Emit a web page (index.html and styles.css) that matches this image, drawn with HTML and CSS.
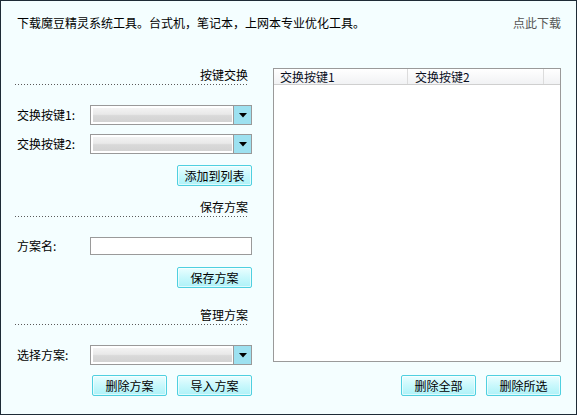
FILE: index.html
```html
<!DOCTYPE html>
<html lang="zh">
<head>
<meta charset="utf-8">
<title>按键交换</title>
<link rel="stylesheet" href="styles.css">
</head>
<body>
<div class="window">
  <div class="topbar">
    <span class="intro">下载魔豆精灵系统工具。台式机，笔记本，上网本专业优化工具。</span>
    <span class="dl">点此下载</span>
  </div>
  <div class="main">
    <div class="left">
      <div class="sec-head">按键交换</div>
      <div class="field f-key1">
        <span class="label">交换按键1:</span>
        <div class="select"><div class="sel-face"></div><div class="sel-btn"><svg width="8" height="5" viewBox="0 0 8 5"><polygon points="0,0 8,0 4,4.5" fill="#000"/></svg></div></div>
      </div>
      <div class="field f-key2">
        <span class="label">交换按键2:</span>
        <div class="select"><div class="sel-face"></div><div class="sel-btn"><svg width="8" height="5" viewBox="0 0 8 5"><polygon points="0,0 8,0 4,4.5" fill="#000"/></svg></div></div>
      </div>
      <div class="btn-row br-add"><button class="btn">添加到列表</button></div>

      <div class="sec-head sh-save">保存方案</div>
      <div class="field f-name">
        <span class="label">方案名:</span>
        <div class="input"></div>
      </div>
      <div class="btn-row br-save"><button class="btn">保存方案</button></div>

      <div class="sec-head sh-manage">管理方案</div>
      <div class="field f-pick">
        <span class="label">选择方案:</span>
        <div class="select"><div class="sel-face"></div><div class="sel-btn"><svg width="8" height="5" viewBox="0 0 8 5"><polygon points="0,0 8,0 4,4.5" fill="#000"/></svg></div></div>
      </div>
      <div class="btn-row br-manage"><button class="btn">删除方案</button><button class="btn">导入方案</button></div>
    </div>
    <div class="right">
      <div class="list">
        <div class="list-head">
          <div class="col c1">交换按键1</div>
          <div class="col c2">交换按键2</div>
          <div class="col c3"></div>
        </div>
      </div>
      <div class="btn-row br-list"><button class="btn">删除全部</button><button class="btn">删除所选</button></div>
    </div>
  </div>
</div>
</body>
</html>
```

FILE: styles.css
```css
html, body {
  margin: 0;
  padding: 0;
  background: #ffffff;
}
body {
  font-family: "Noto Sans CJK SC", "Liberation Sans", sans-serif;
  font-size: 12px;
  color: #000;
}
.window {
  width: 577px;
  height: 415px;
  box-sizing: border-box;
  border: 1px solid #1e2b36;
  background: #f4feff;
}
.topbar {
  height: 63px;
  box-sizing: border-box;
  padding: 13px 15px 0 16px;
  display: flex;
  justify-content: space-between;
  align-items: flex-start;
  line-height: 18px;
}
.dl {
  color: #555;
}
.main {
  display: flex;
  padding-left: 14px;
}
.left {
  width: 237px;
  display: flex;
  flex-direction: column;
}
.right {
  width: 288px;
  margin-left: 21px;
  display: flex;
  flex-direction: column;
}
.sec-head {
  height: 20px;
  box-sizing: border-box;
  padding: 2px 4px 0 0;
  line-height: 18px;
  text-align: right;
  position: relative;
}
.sec-head::after {
  content: "";
  display: block;
  height: 1px;
  margin-top: 0;
  background-image: repeating-linear-gradient(to right, #5a5a5a 0, #5a5a5a 1px, transparent 1px, transparent 3px);
}
.sh-save { margin-top: 10px; }
.sh-manage { margin-top: 16px; }
.field {
  display: flex;
  align-items: center;
  padding-left: 2px;
}
.f-key1 { margin-top: 21px; }
.f-key2 { margin-top: 9px; }
.f-name { margin-top: 21px; }
.f-pick { margin-top: 21px; }
.label {
  width: 73px;
  line-height: 18px;
}
.select {
  width: 162px;
  height: 20px;
  box-sizing: border-box;
  border: 1px solid #999;
  background: #fff;
  display: flex;
}
.sel-face {
  flex: 1;
  margin: 2px 1px 2px 2px;
  background: linear-gradient(#f3f3f3, #e9e9e9 45%, #d9d9d9 55%, #d3d3d3);
}
.sel-btn {
  width: 17px;
  border-left: 1px solid #999;
  background: #9de1f0;
  display: flex;
  align-items: center;
  justify-content: center;
}
.sel-btn svg { display: block; }
.input {
  width: 162px;
  height: 18px;
  box-sizing: border-box;
  border: 1px solid #9a9a9a;
  background: #fff;
}
.btn-row {
  display: flex;
  justify-content: flex-end;
  gap: 10px;
}
.br-add { margin-top: 11px; }
.br-save { margin-top: 12px; }
.br-manage { margin-top: 10px; }
.br-list { margin-top: 13px; }
.btn {
  width: 75px;
  height: 21px;
  box-sizing: border-box;
  border: 1px solid #4fd0e0;
  border-radius: 2px;
  background: linear-gradient(#eafeff, #c9f8fc 50%, #aef2f8);
  box-shadow: inset 0 0 0 1px rgba(255,255,255,0.6);
  font-family: "Noto Sans CJK SC", "Liberation Sans", sans-serif;
  font-size: 12px;
  color: #000;
  padding: 0;
  line-height: 18px;
}
.list {
  margin-top: 4px;
  height: 294px;
  box-sizing: border-box;
  border: 1px solid #9a9a9a;
  background: #fff;
}
.list-head {
  display: flex;
  height: 16px;
  box-sizing: border-box;
  border-bottom: 1px solid #cfcfcf;
  background: linear-gradient(#ffffff, #f1f2f4);
  line-height: 15px;
  color: #0a0f1e;
}
.col {
  box-sizing: border-box;
  border-right: 1px solid #dcdcdc;
}
.c1 { width: 134px; padding-left: 6px; }
.c2 { width: 136px; padding-left: 7px; }
.c3 { flex: 1; border-right: none; }
```
